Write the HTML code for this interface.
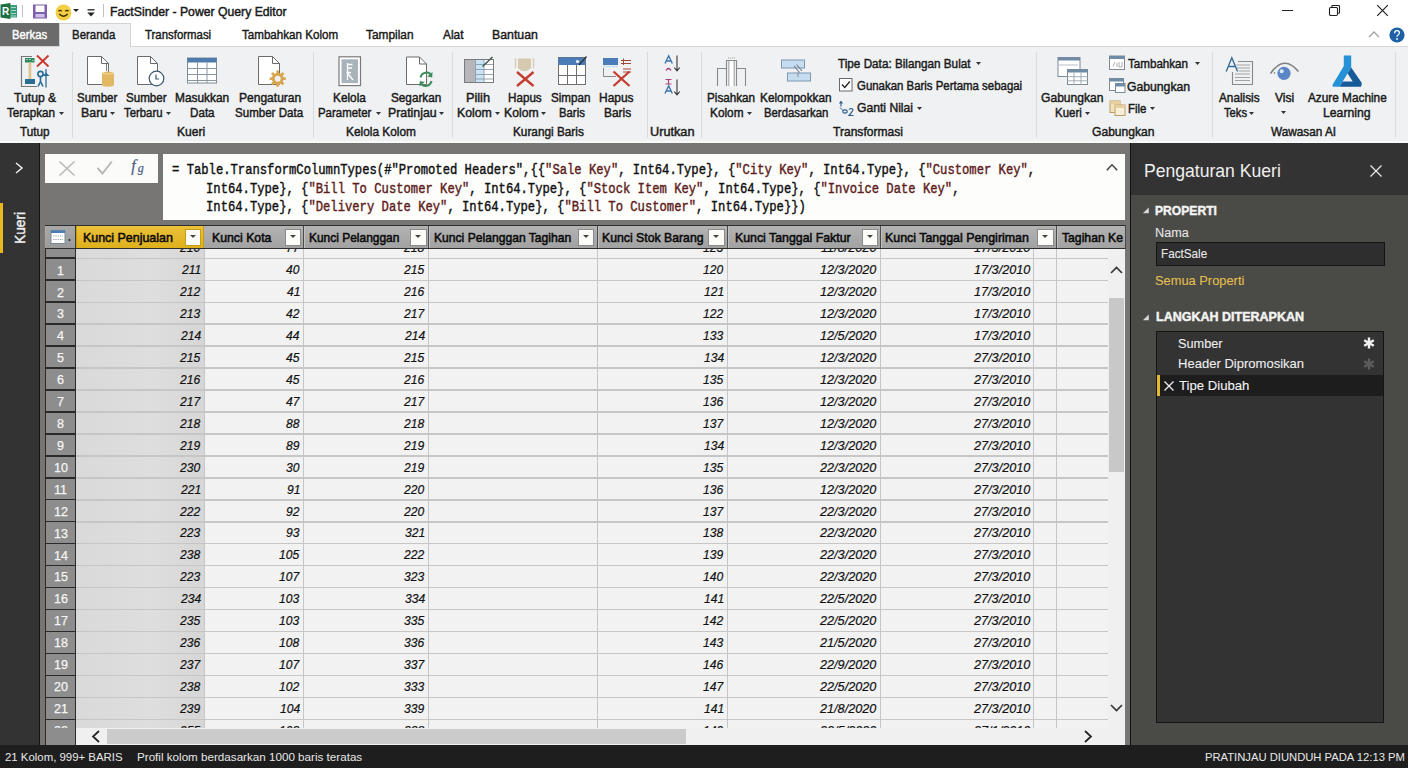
<!DOCTYPE html>
<html><head><meta charset="utf-8">
<style>
*{box-sizing:border-box;margin:0;padding:0}
html,body{width:1408px;height:768px;overflow:hidden;background:#f1f1f1;font-family:"Liberation Sans",sans-serif}
.a{position:absolute}
.t{position:absolute;line-height:1;white-space:pre;-webkit-text-stroke:0.45px currentColor}
</style></head><body>
<div class="a" style="left:0px;top:0px;width:1408px;height:46px;background:#ffffff;"></div>
<div class="a" style="left:0px;top:46px;width:1408px;height:97px;background:#eff1f2;"></div>
<div class="a" style="left:0px;top:46px;width:1408px;height:1px;background:#d8d8d8;"></div>
<div class="a" style="left:0px;top:141px;width:1408px;height:1.5px;background:#f8f9f9;"></div>
<svg class="a" style="left:0;top:2px" width="18" height="18" viewBox="0 0 18 18">
  <path d="M0.5 2.5 L10.5 1 L10.5 17 L0.5 15.5 Z" fill="#1e6e44"/>
  <rect x="10" y="3" width="7" height="12.5" fill="#3b9c7d"/>
  <path d="M11 5.5h5M11 8.5h5M11 11.5h5M11 14h5" stroke="#9fdcc8" stroke-width="1"/>
  <text x="2" y="13" font-family="Liberation Sans" font-weight="bold" font-size="10" fill="#fff">R</text>
 </svg>
<div class="a" style="left:22px;top:5px;width:1px;height:12px;background:#c0c0c0;"></div>
<svg class="a" style="left:33px;top:4px" width="14" height="15" viewBox="0 0 14 15">
  <rect x="0" y="0.5" width="14" height="14" fill="#7e5fae"/>
  <rect x="2.5" y="1.5" width="9" height="6.5" fill="#fbfbfb"/>
  <rect x="2.5" y="10" width="9" height="3.5" fill="#cfc0e6"/>
 </svg>
<svg class="a" style="left:55px;top:4px" width="17" height="17" viewBox="0 0 17 17">
  <circle cx="8.5" cy="8.5" r="8" fill="#f2cf45"/>
  <path d="M3.5 7.3 q1.6 -1.8 3.2 0 M10.3 7.3 q1.6 -1.8 3.2 0" stroke="#3a2a00" stroke-width="1.3" fill="none"/>
  <path d="M4.3 10 q4.2 4.5 8.4 0" stroke="#3a2a00" stroke-width="1.5" fill="none"/>
 </svg>
<svg class="a" style="left:73px;top:9px" width="6" height="3"><path d="M0 0H6L3.0 3Z" fill="#222"/></svg>
<svg class="a" style="left:87px;top:9px" width="8" height="8"><path d="M0.5 0.8h7" stroke="#222" stroke-width="1.3"/><path d="M0.3 3.5h7.4l-3.7 4z" fill="#222"/></svg>
<div class="a" style="left:103px;top:4px;width:1px;height:13px;background:#c0c0c0;"></div>
<div class="t" style="left:109.71px;top:5.70px;font-size:12.3px;color:#1a1a1a;transform:scaleX(0.9938);transform-origin:0 0;">FactSinder - Power Query Editor</div>
<div class="a" style="left:1282px;top:10px;width:11px;height:1px;background:#222;"></div>
<svg class="a" style="left:1328px;top:4px" width="13" height="13" viewBox="0 0 13 13"><rect x="1.5" y="3.5" width="8" height="8" rx="1.2" fill="none" stroke="#222" stroke-width="1.1"/><path d="M3.8 3.5 V2.2 Q3.8 1.5 4.5 1.5 H10.8 Q11.5 1.5 11.5 2.2 V8.5 Q11.5 9.2 10.8 9.2 H9.5" fill="none" stroke="#222" stroke-width="1.1"/></svg>
<svg class="a" style="left:1376px;top:4px" width="13" height="13" viewBox="0 0 13 13"><path d="M1.2 1.2L11.8 11.8M11.8 1.2L1.2 11.8" stroke="#222" stroke-width="1.2"/></svg>
<div class="a" style="left:0px;top:23px;width:59px;height:23px;background:#6b6b6b;"></div>
<div class="a" style="left:59px;top:23px;width:72px;height:24px;background:#eff1f2;border:1px solid #d2d2d2;border-bottom:none;box-sizing:border-box"></div>
<div class="t" style="left:11.55px;top:28.00px;font-size:13.4px;color:#ffffff;transform:scaleX(0.8450);transform-origin:0 0;">Berkas</div>
<div class="t" style="left:72.25px;top:28.00px;font-size:13.4px;color:#1a1a1a;transform:scaleX(0.8540);transform-origin:0 0;">Beranda</div>
<div class="t" style="left:145.40px;top:28.00px;font-size:13.4px;color:#1a1a1a;transform:scaleX(0.8519);transform-origin:0 0;">Transformasi</div>
<div class="t" style="left:241.50px;top:28.00px;font-size:13.4px;color:#1a1a1a;transform:scaleX(0.8664);transform-origin:0 0;">Tambahkan Kolom</div>
<div class="t" style="left:366.00px;top:28.00px;font-size:13.4px;color:#1a1a1a;transform:scaleX(0.8868);transform-origin:0 0;">Tampilan</div>
<div class="t" style="left:442.60px;top:28.00px;font-size:13.4px;color:#1a1a1a;transform:scaleX(0.8870);transform-origin:0 0;">Alat</div>
<div class="t" style="left:491.88px;top:28.00px;font-size:13.4px;color:#1a1a1a;transform:scaleX(0.9208);transform-origin:0 0;">Bantuan</div>
<svg class="a" style="left:1368px;top:31px" width="12" height="7"><path d="M1 6L6 1L11 6" stroke="#a0a0a0" stroke-width="1.3" fill="none"/></svg>
<svg class="a" style="left:1389px;top:27px" width="16" height="16" viewBox="0 0 16 16"><circle cx="8" cy="8" r="7.6" fill="#1d62a6"/><path d="M5.6 6.2 Q5.6 3.6 8 3.6 Q10.4 3.6 10.4 5.8 Q10.4 7.2 9 8 Q8 8.6 8 9.8" stroke="#fff" stroke-width="1.3" fill="none"/><circle cx="8" cy="12" r="0.9" fill="#fff"/></svg>
<div class="t" style="left:14.10px;top:92.30px;font-size:12.6px;color:#1a1a1a;transform:scaleX(0.9674);transform-origin:0 0;">Tutup &amp;</div>
<div class="t" style="left:6.80px;top:106.80px;font-size:12.6px;color:#1a1a1a;transform:scaleX(0.9255);transform-origin:0 0;">Terapkan</div>
<div class="t" style="left:77.49px;top:92.30px;font-size:12.6px;color:#1a1a1a;transform:scaleX(0.9140);transform-origin:0 0;">Sumber</div>
<div class="t" style="left:80.82px;top:106.80px;font-size:12.6px;color:#1a1a1a;transform:scaleX(0.9840);transform-origin:0 0;">Baru</div>
<div class="t" style="left:125.88px;top:92.30px;font-size:12.6px;color:#1a1a1a;transform:scaleX(0.9209);transform-origin:0 0;">Sumber</div>
<div class="t" style="left:123.90px;top:106.80px;font-size:12.6px;color:#1a1a1a;transform:scaleX(0.9024);transform-origin:0 0;">Terbaru</div>
<div class="t" style="left:174.56px;top:92.30px;font-size:12.6px;color:#1a1a1a;transform:scaleX(0.9446);transform-origin:0 0;">Masukkan</div>
<div class="t" style="left:189.58px;top:106.80px;font-size:12.6px;color:#1a1a1a;transform:scaleX(0.9240);transform-origin:0 0;">Data</div>
<div class="t" style="left:238.84px;top:92.30px;font-size:12.6px;color:#1a1a1a;transform:scaleX(0.9556);transform-origin:0 0;">Pengaturan</div>
<div class="t" style="left:235.48px;top:106.80px;font-size:12.6px;color:#1a1a1a;transform:scaleX(0.9178);transform-origin:0 0;">Sumber Data</div>
<div class="t" style="left:332.56px;top:92.30px;font-size:12.6px;color:#1a1a1a;transform:scaleX(0.9382);transform-origin:0 0;">Kelola</div>
<div class="t" style="left:317.99px;top:106.80px;font-size:12.6px;color:#1a1a1a;transform:scaleX(0.9069);transform-origin:0 0;">Parameter</div>
<div class="t" style="left:390.77px;top:92.30px;font-size:12.6px;color:#1a1a1a;transform:scaleX(0.9327);transform-origin:0 0;">Segarkan</div>
<div class="t" style="left:388.02px;top:106.80px;font-size:12.6px;color:#1a1a1a;transform:scaleX(0.9792);transform-origin:0 0;">Pratinjau</div>
<div class="t" style="left:466.29px;top:92.30px;font-size:12.6px;color:#1a1a1a;transform:scaleX(1.0091);transform-origin:0 0;">Pilih</div>
<div class="t" style="left:457.22px;top:106.80px;font-size:12.6px;color:#1a1a1a;transform:scaleX(0.9765);transform-origin:0 0;">Kolom</div>
<div class="t" style="left:507.97px;top:92.30px;font-size:12.6px;color:#1a1a1a;transform:scaleX(0.9257);transform-origin:0 0;">Hapus</div>
<div class="t" style="left:503.73px;top:106.80px;font-size:12.6px;color:#1a1a1a;transform:scaleX(0.9706);transform-origin:0 0;">Kolom</div>
<div class="t" style="left:551.48px;top:92.30px;font-size:12.6px;color:#1a1a1a;transform:scaleX(0.9244);transform-origin:0 0;">Simpan</div>
<div class="t" style="left:559.00px;top:106.80px;font-size:12.6px;color:#1a1a1a;transform:scaleX(0.9000);transform-origin:0 0;">Baris</div>
<div class="t" style="left:599.35px;top:92.30px;font-size:12.6px;color:#1a1a1a;transform:scaleX(0.9486);transform-origin:0 0;">Hapus</div>
<div class="t" style="left:603.56px;top:106.80px;font-size:12.6px;color:#1a1a1a;transform:scaleX(0.9444);transform-origin:0 0;">Baris</div>
<div class="t" style="left:706.87px;top:92.30px;font-size:12.6px;color:#1a1a1a;transform:scaleX(0.9280);transform-origin:0 0;">Pisahkan</div>
<div class="t" style="left:709.56px;top:106.80px;font-size:12.6px;color:#1a1a1a;transform:scaleX(0.9382);transform-origin:0 0;">Kolom</div>
<div class="t" style="left:759.86px;top:92.30px;font-size:12.6px;color:#1a1a1a;transform:scaleX(0.9387);transform-origin:0 0;">Kelompokkan</div>
<div class="t" style="left:763.60px;top:106.80px;font-size:12.6px;color:#1a1a1a;transform:scaleX(0.9000);transform-origin:0 0;">Berdasarkan</div>
<div class="t" style="left:1041.04px;top:92.30px;font-size:12.6px;color:#1a1a1a;transform:scaleX(0.9603);transform-origin:0 0;">Gabungkan</div>
<div class="t" style="left:1054.59px;top:106.80px;font-size:12.6px;color:#1a1a1a;transform:scaleX(0.9107);transform-origin:0 0;">Kueri</div>
<div class="t" style="left:1219.30px;top:92.30px;font-size:12.6px;color:#1a1a1a;transform:scaleX(0.9349);transform-origin:0 0;">Analisis</div>
<div class="t" style="left:1223.80px;top:106.80px;font-size:12.6px;color:#1a1a1a;transform:scaleX(0.8880);transform-origin:0 0;">Teks</div>
<div class="t" style="left:1274.80px;top:92.30px;font-size:12.6px;color:#1a1a1a;transform:scaleX(0.9579);transform-origin:0 0;">Visi</div>
<div class="t" style="left:1307.90px;top:92.30px;font-size:12.6px;color:#1a1a1a;transform:scaleX(0.9373);transform-origin:0 0;">Azure Machine</div>
<div class="t" style="left:1323.03px;top:106.80px;font-size:12.6px;color:#1a1a1a;transform:scaleX(0.9702);transform-origin:0 0;">Learning</div>
<div class="t" style="left:20.00px;top:126.00px;font-size:12.6px;color:#1a1a1a;transform:scaleX(0.9323);transform-origin:0 0;">Tutup</div>
<div class="t" style="left:176.74px;top:126.00px;font-size:12.6px;color:#1a1a1a;transform:scaleX(0.9571);transform-origin:0 0;">Kueri</div>
<div class="t" style="left:346.46px;top:126.00px;font-size:12.6px;color:#1a1a1a;transform:scaleX(0.9431);transform-origin:0 0;">Kelola Kolom</div>
<div class="t" style="left:512.66px;top:126.00px;font-size:12.6px;color:#1a1a1a;transform:scaleX(0.9365);transform-origin:0 0;">Kurangi Baris</div>
<div class="t" style="left:650.29px;top:126.00px;font-size:12.6px;color:#1a1a1a;transform:scaleX(1.0095);transform-origin:0 0;">Urutkan</div>
<div class="t" style="left:833.00px;top:126.00px;font-size:12.6px;color:#1a1a1a;transform:scaleX(0.9583);transform-origin:0 0;">Transformasi</div>
<div class="t" style="left:1092.04px;top:126.00px;font-size:12.6px;color:#1a1a1a;transform:scaleX(0.9603);transform-origin:0 0;">Gabungkan</div>
<div class="t" style="left:1271.00px;top:126.00px;font-size:12.6px;color:#1a1a1a;transform:scaleX(0.9368);transform-origin:0 0;">Wawasan AI</div>
<div class="t" style="left:837.80px;top:57.80px;font-size:12.6px;color:#1a1a1a;transform:scaleX(0.9310);transform-origin:0 0;">Tipe Data: Bilangan Bulat</div>
<div class="t" style="left:856.79px;top:79.50px;font-size:12.6px;color:#1a1a1a;transform:scaleX(0.9072);transform-origin:0 0;">Gunakan Baris Pertama sebagai</div>
<div class="t" style="left:856.74px;top:102.30px;font-size:12.6px;color:#1a1a1a;transform:scaleX(0.9643);transform-origin:0 0;">Ganti Nilai</div>
<div class="t" style="left:1128.00px;top:57.90px;font-size:12.6px;color:#1a1a1a;transform:scaleX(0.9219);transform-origin:0 0;">Tambahkan</div>
<div class="t" style="left:1127.03px;top:80.50px;font-size:12.6px;color:#1a1a1a;transform:scaleX(0.9683);transform-origin:0 0;">Gabungkan</div>
<div class="t" style="left:1127.89px;top:102.50px;font-size:12.6px;color:#1a1a1a;transform:scaleX(0.9053);transform-origin:0 0;">File</div>
<svg class="a" style="left:59px;top:112px" width="5" height="3"><path d="M0 0H5L2.5 3Z" fill="#333"/></svg>
<svg class="a" style="left:110px;top:112px" width="5" height="3"><path d="M0 0H5L2.5 3Z" fill="#333"/></svg>
<svg class="a" style="left:166px;top:112px" width="5" height="3"><path d="M0 0H5L2.5 3Z" fill="#333"/></svg>
<svg class="a" style="left:376px;top:112px" width="5" height="3"><path d="M0 0H5L2.5 3Z" fill="#333"/></svg>
<svg class="a" style="left:439px;top:112px" width="5" height="3"><path d="M0 0H5L2.5 3Z" fill="#333"/></svg>
<svg class="a" style="left:495px;top:112px" width="5" height="3"><path d="M0 0H5L2.5 3Z" fill="#333"/></svg>
<svg class="a" style="left:541px;top:112px" width="5" height="3"><path d="M0 0H5L2.5 3Z" fill="#333"/></svg>
<svg class="a" style="left:747px;top:112px" width="5" height="3"><path d="M0 0H5L2.5 3Z" fill="#333"/></svg>
<svg class="a" style="left:1085px;top:112px" width="5" height="3"><path d="M0 0H5L2.5 3Z" fill="#333"/></svg>
<svg class="a" style="left:1249px;top:112px" width="5" height="3"><path d="M0 0H5L2.5 3Z" fill="#333"/></svg>
<svg class="a" style="left:1281px;top:111px" width="5" height="3"><path d="M0 0H5L2.5 3Z" fill="#333"/></svg>
<svg class="a" style="left:976px;top:62px" width="5" height="3"><path d="M0 0H5L2.5 3Z" fill="#333"/></svg>
<svg class="a" style="left:917px;top:107px" width="5" height="3"><path d="M0 0H5L2.5 3Z" fill="#333"/></svg>
<svg class="a" style="left:1195px;top:62px" width="5" height="3"><path d="M0 0H5L2.5 3Z" fill="#333"/></svg>
<svg class="a" style="left:1150px;top:107px" width="5" height="3"><path d="M0 0H5L2.5 3Z" fill="#333"/></svg>
<div class="a" style="left:72px;top:52px;width:1px;height:86px;background:#d9dcde;"></div>
<div class="a" style="left:313px;top:52px;width:1px;height:86px;background:#d9dcde;"></div>
<div class="a" style="left:452px;top:52px;width:1px;height:86px;background:#d9dcde;"></div>
<div class="a" style="left:647px;top:52px;width:1px;height:86px;background:#d9dcde;"></div>
<div class="a" style="left:701px;top:52px;width:1px;height:86px;background:#d9dcde;"></div>
<div class="a" style="left:1036px;top:52px;width:1px;height:86px;background:#d9dcde;"></div>
<div class="a" style="left:1212px;top:52px;width:1px;height:86px;background:#d9dcde;"></div>
<div class="a" style="left:1395px;top:52px;width:1px;height:86px;background:#d9dcde;"></div>
<svg class="a" style="left:0;top:0" width="1408" height="143" viewBox="0 0 1408 143">
<path d="M32 56.5H21.5V86.5H37" fill="none" stroke="#777" stroke-width="1.2"/>
<rect x="25" y="58" width="9.5" height="4.5" fill="#2f8b5f"/>
<path d="M26 59.5h2M29 59.5h2M32 60.5h1.5" stroke="#bfe3cf" stroke-width="0.8"/>
<rect x="28.5" y="62.5" width="2.8" height="16.5" fill="#dfc58e"/>
<rect x="25" y="79" width="10" height="5" fill="#2a6d95"/>
<path d="M37 55.5L48.5 66.5M48.5 55.5L37 66.5" stroke="#c8352b" stroke-width="1.8"/>
<circle cx="40.5" cy="74" r="2.6" fill="none" stroke="#2a6d95" stroke-width="1.6"/>
<path d="M40.5 76.5V83M38 86.5L40.5 81.5L43 86.5" stroke="#2a6d95" stroke-width="1.6" fill="none"/>
<path d="M46 69V87.5" stroke="#2a6d95" stroke-width="1.3"/>
<path d="M42.5 76L46 72.5L49.5 76Z" fill="#2a6d95"/>
<path d="M87.5 56.5H101.5L108.5 63.5V84.5H87.5Z" fill="#fff" stroke="#6b6b6b" stroke-width="1"/><path d="M101.5 56.5V63.5H108.5" fill="none" stroke="#6b6b6b" stroke-width="1"/><path d="M106.5 64V71" stroke="#777" stroke-width="1"/>
<path d="M102 73 Q108 70 114 73 V85.5 Q108 88 102 85.5Z" fill="#e2b865"/>
<path d="M102 73 Q108 75.5 114 73" stroke="#f2d79a" stroke-width="1" fill="none"/>
<path d="M137.5 56.5H150.5L157.5 63.5V84.5H137.5Z" fill="#fff" stroke="#6b6b6b" stroke-width="1"/><path d="M150.5 56.5V63.5H157.5" fill="none" stroke="#6b6b6b" stroke-width="1"/><circle cx="156.5" cy="78.5" r="7.3" fill="#fff" stroke="#3d5672" stroke-width="1.2"/>
<path d="M156 74.5V79H159" stroke="#3d5672" stroke-width="1.2" fill="none"/>
<rect x="187.5" y="58" width="29" height="25" fill="#fff" stroke="#7f8b96" stroke-width="1"/>
<rect x="187.5" y="58" width="29" height="4.5" fill="#4d7bab"/>
<path d="M188 68.5H216M188 74.5H216M188 80.5H216M197.5 62.5V83M207 62.5V83" stroke="#8a96a0" stroke-width="1"/>
<path d="M258.5 56.5H272.5L279.5 63.5V84.5H258.5Z" fill="#fff" stroke="#6b6b6b" stroke-width="1"/><path d="M272.5 56.5V63.5H279.5" fill="none" stroke="#6b6b6b" stroke-width="1"/><polygon points="285.80,77.39 285.80,80.01 283.44,80.06 282.72,81.80 284.35,83.50 282.50,85.35 280.80,83.72 279.06,84.44 279.01,86.80 276.39,86.80 276.34,84.44 274.60,83.72 272.90,85.35 271.05,83.50 272.68,81.80 271.96,80.06 269.60,80.01 269.60,77.39 271.96,77.34 272.68,75.60 271.05,73.90 272.90,72.05 274.60,73.68 276.34,72.96 276.39,70.60 279.01,70.60 279.06,72.96 280.80,73.68 282.50,72.05 284.35,73.90 282.72,75.60 283.44,77.34" fill="#d8a550"/><circle cx="277.7" cy="78.7" r="2.95" fill="#eff1f2"/><rect x="339" y="56.8" width="21.5" height="28.8" fill="#fff" stroke="#7a7a7a" stroke-width="1.2"/>
<rect x="341.5" y="59.3" width="16.5" height="23.8" fill="#a8b3ba"/>
<path d="M347.5 63V80M347.5 64.5H352.5M347.5 68H352M346.5 72.5H351M347.5 73L353 80" stroke="#fff" stroke-width="1.3" fill="none"/>
<path d="M406.5 57.0H419.5L426.5 64.0V84.5H406.5Z" fill="#fff" stroke="#6b6b6b" stroke-width="1"/><path d="M419.5 57.0V64.0H426.5" fill="none" stroke="#6b6b6b" stroke-width="1"/><path d="M420.5 77.5 A6 6 0 0 1 431.5 75.5" stroke="#3d8c5a" stroke-width="2" fill="none"/>
<path d="M432.5 72L432.2 77.5L427.2 76.5Z" fill="#3d8c5a"/>
<path d="M431.5 81 A6 6 0 0 1 420.5 83" stroke="#3d8c5a" stroke-width="2" fill="none"/>
<path d="M419.5 86.5L419.8 81L424.8 82Z" fill="#3d8c5a"/>
<rect x="464.5" y="59.5" width="29" height="23" fill="#fff" stroke="#7a7a7a" stroke-width="1"/>
<rect x="465" y="60" width="10.5" height="22" fill="#b6b6ba"/>
<rect x="475.5" y="60" width="8.5" height="22" fill="#c9e4f6"/>
<path d="M475.5 64.5H493M475.5 69.5H493M475.5 74.5H493M475.5 79H493M475.5 60V82M484 60V82" stroke="#8a9aa8" stroke-width="0.9"/>
<path d="M482.5 66.5L492.5 57" stroke="#3b5a50" stroke-width="1.5"/>
<path d="M518 58.5H531V68L527 71H522L518 68Z" fill="#d5cab0"/>
<path d="M515.5 58V68M533.5 58V68" stroke="#d8ceb6" stroke-width="1.4"/>
<path d="M517 72L533.5 86M533.5 72L517 86" stroke="#c43b30" stroke-width="2.3"/>
<rect x="558.5" y="57.5" width="27" height="27" fill="#fff" stroke="#6f6f6f" stroke-width="1"/>
<rect x="558.5" y="57.5" width="27" height="7.5" fill="#4a7db8"/>
<path d="M559 75.5H585M567.5 65V84.5M576.5 65V84.5" stroke="#6f6f6f" stroke-width="1"/>
<circle cx="577.5" cy="61.5" r="1.6" fill="#fff"/>
<path d="M579 65L586.5 56.5" stroke="#333" stroke-width="1.3"/>
<rect x="603" y="58" width="15" height="7" fill="#4a7db8"/>
<path d="M603 66.5H618" stroke="#c8dced" stroke-width="1.2"/>
<path d="M603.5 68V76.5H616" stroke="#888" stroke-width="1" fill="none"/>
<path d="M621 60.5H631M621 63.5H631M623 69H631M623 72H631M623.5 58.5V65" stroke="#a04a3a" stroke-width="1" fill="none"/>
<path d="M613.5 71.5L629.5 86M629.5 71.5L613.5 86" stroke="#c43b30" stroke-width="2.3"/>
<path d="M665 63.5L668.7 55.8L672.3 63.5M666.2 61H671.2" stroke="#3b72b0" stroke-width="1.4" fill="none"/>
<path d="M666 70.5Q668.5 66.5 671 70.5" stroke="#b0407a" stroke-width="1.3" fill="none"/>
<path d="M677 55.5V70.5M674.2 67.5L677 70.8L679.8 67.5" stroke="#333" stroke-width="1.1" fill="none"/>
<path d="M665.5 79.5H671.5M665.5 84H671.5M668.5 79.5V84" stroke="#b0407a" stroke-width="1.2" fill="none"/>
<path d="M665 93.5L668.7 85.8L672.3 93.5M666.2 91H671.2" stroke="#3b72b0" stroke-width="1.4" fill="none"/>
<path d="M677 79.5V94.5M674.2 91.5L677 94.8L679.8 91.5" stroke="#333" stroke-width="1.1" fill="none"/>
<path d="M717.5 86V68.5H726.5M736.5 68.5H745.5V86" stroke="#8a8a8a" stroke-width="1.1" fill="none"/>
<path d="M726.5 86V60.5H736.5V86M729 86V60.5M734 86V60.5" stroke="#8a8a8a" stroke-width="1.1" fill="none"/>
<rect x="729.5" y="61" width="4" height="25" fill="#ffffff"/>
<path d="M728 58H735" stroke="#9a9a9a" stroke-width="1" stroke-dasharray="1 1"/>
<rect x="781.5" y="60" width="23" height="8" fill="#c6dcef" stroke="#7d98b3" stroke-width="1"/>
<rect x="787.5" y="73" width="23" height="8" fill="#c6dcef" stroke="#7d98b3" stroke-width="1"/>
<path d="M794 66L799.5 72.5M796.5 64.5L802 71" stroke="#6d7f90" stroke-width="1.1"/>
<path d="M798 72.5V77" stroke="#6d7f90" stroke-width="0.8"/>
<rect x="839.5" y="78.5" width="12.5" height="12.5" fill="#fff" stroke="#6a6a6a" stroke-width="1"/>
<path d="M842 84.5L844.8 87.5L849.8 81.5" stroke="#222" stroke-width="1.3" fill="none"/>
<path d="M839.5 103.5L841 101.5L842.5 103.5M841 102V106.5" stroke="#2d5f8e" stroke-width="1.1" fill="none"/>
<path d="M840 107.5L843 110.5" stroke="#2d5f8e" stroke-width="1" fill="none"/>
<ellipse cx="845" cy="111.5" rx="2.2" ry="1.6" fill="none" stroke="#2d5f8e" stroke-width="1.1"/>
<path d="M849 109.5Q851.5 107.5 853 109.5Q853 111 849 115.5H853.5" stroke="#2d5f8e" stroke-width="1.2" fill="none"/>
<rect x="1058.0" y="57.5" width="22.0" height="19" fill="#fff" stroke="#7d8a96" stroke-width="1"/><rect x="1058.0" y="57.5" width="22.0" height="3" fill="#6f8ba6"/><path d="M1059 65H1078" stroke="#b8c0c8" stroke-width="1"/><rect x="1067.5" y="69.5" width="20" height="15" fill="#fff" stroke="#7d8a96" stroke-width="1"/><rect x="1067.5" y="69.5" width="20" height="3" fill="#6f8ba6"/><path d="M1067 76.7H1088M1067 80.8H1088M1074.0 72.5V85M1081.0 72.5V85" stroke="#9aa4ad" stroke-width="0.9"/><rect x="1109.5" y="56.0" width="15" height="13.5" fill="#fff" stroke="#7d8a96" stroke-width="1"/><rect x="1109.5" y="56.0" width="15" height="3" fill="#6f8ba6"/><path d="M1113 66.5L1115 62M1117 63V67M1119 62V67H1122V62" stroke="#9a9a9a" stroke-width="0.8" fill="none"/><rect x="1109.5" y="78.5" width="14" height="12" fill="#fff" stroke="#7d8a96" stroke-width="1"/><rect x="1109.5" y="78.5" width="14" height="3" fill="#6f8ba6"/><rect x="1115.5" y="83.5" width="9.5" height="9" fill="#fff" stroke="#7d8a96" stroke-width="1"/><rect x="1115.5" y="83.5" width="9.5" height="3" fill="#6f8ba6"/><rect x="1110.0" y="101.0" width="10.0" height="11.5" fill="#f3e3bd" stroke="#b99e67" stroke-width="1"/><rect x="1110.0" y="101.0" width="10.0" height="3" fill="#e6cf9c"/><rect x="1115.0" y="105.0" width="10.0" height="10.5" fill="#f8efd8" stroke="#b99e67" stroke-width="1"/><rect x="1115.0" y="105.0" width="10.0" height="3" fill="#e6cf9c"/><path d="M1232.5 72V84.5H1252.5V61.5H1238" stroke="#8a8a8a" stroke-width="1.1" fill="none"/>
<path d="M1236.5 65H1250M1236.5 68H1250M1239 71H1250M1235 74H1250M1235 77.5H1250M1235 80.5H1250" stroke="#9a9a9a" stroke-width="0.9"/>
<path d="M1226.2 71.5L1231.8 57.8L1237.6 71.5M1228.3 66.5H1235.5" stroke="#3a6b92" stroke-width="1.4" fill="none"/>
<path d="M1270.5 73.5 Q1284 54 1298.5 71.5" stroke="#808080" stroke-width="1.6" fill="none"/>
<circle cx="1284" cy="73.3" r="6.6" fill="#5b86c5"/>
<circle cx="1281.7" cy="71.2" r="2" fill="#dfe8f5"/>
<circle cx="1274.5" cy="73" r="0.7" fill="#555"/>
<path d="M1343.8 55.5H1351.2V67.5L1339.5 86.8H1333.2Q1332 86.5 1332.6 84.8L1343.8 66Z" fill="#2591d6"/>
<path d="M1351.2 67.5L1361.5 82.5Q1362.3 84 1361 86.8H1339.5L1342.8 81.5H1352.8L1347.6 73.5Z" fill="#175a98"/>
</svg>
<div class="a" style="left:0px;top:143px;width:39px;height:602px;background:#333333;"></div>
<div class="a" style="left:39px;top:143px;width:1px;height:602px;background:#151515;"></div>
<div class="a" style="left:40px;top:143px;width:1090px;height:602px;background:#777674;"></div>
<div class="a" style="left:1130px;top:143px;width:278px;height:602px;background:#4a4a46;"></div>
<div class="a" style="left:1130px;top:143px;width:278px;height:52px;background:#333333;"></div>
<div class="a" style="left:0px;top:745px;width:1408px;height:23px;background:#1e1e1e;"></div>
<div class="a" style="left:45px;top:153.5px;width:113px;height:29px;background:#fbfbfa;"></div>
<svg class="a" style="left:45px;top:153px" width="113" height="30" viewBox="45 153 113 30"><path d="M59.5 161.5L74.5 175.5M74.5 161.5L59.5 175.5" stroke="#b9b9b9" stroke-width="1.6"/><path d="M97.5 168L102.5 173.5L111.8 161.5" stroke="#b9b9b9" stroke-width="2" fill="none"/></svg>
<div class="t" style="left:131.20px;top:158.20px;font-size:16px;color:#4b5b82;font-style:italic;font-family:'Liberation Serif';-webkit-text-stroke:0.2px;">f</div>
<div class="t" style="left:137.80px;top:162.00px;font-size:12px;color:#4b5b82;font-style:italic;font-family:'Liberation Serif';-webkit-text-stroke:0.2px;">g</div>
<div class="a" style="left:163px;top:153.5px;width:962px;height:66.5px;background:#fdfdfb;"></div>
<svg class="a" style="left:1105px;top:162px" width="14" height="10"><path d="M1.8 8.2L7 2.8L12.2 8.2" stroke="#444" stroke-width="1.6" fill="none"/></svg>
<div class="a" style="left:45px;top:224.5px;width:1081px;height:1px;background:#2e2e2e;"></div>
<div class="a" style="left:45px;top:225.5px;width:1081px;height:22.5px;background:linear-gradient(#b3b3b3,#a2a2a2);"></div>
<div class="a" style="left:45px;top:247.5px;width:1081px;height:1px;background:#2e2e2e;"></div>
<div class="a" style="left:45.5px;top:225.5px;width:30.5px;height:22.5px;background:linear-gradient(#a8a8a8,#9a9a9a);border-right:1px solid #3a3a3a"></div>
<div class="a" style="left:76px;top:225.5px;width:128px;height:22.5px;background:linear-gradient(#ecc23a,#deb01c);border:1px solid #c89a10;border-top:none;border-bottom:none"></div>
<div class="a" style="left:303px;top:225.5px;width:1px;height:22.5px;background:#4a4a4a;"></div>
<div class="a" style="left:304px;top:225.5px;width:1px;height:22.5px;background:#c0c0c0;"></div>
<div class="a" style="left:428px;top:225.5px;width:1px;height:22.5px;background:#4a4a4a;"></div>
<div class="a" style="left:429px;top:225.5px;width:1px;height:22.5px;background:#c0c0c0;"></div>
<div class="a" style="left:597px;top:225.5px;width:1px;height:22.5px;background:#4a4a4a;"></div>
<div class="a" style="left:598px;top:225.5px;width:1px;height:22.5px;background:#c0c0c0;"></div>
<div class="a" style="left:727px;top:225.5px;width:1px;height:22.5px;background:#4a4a4a;"></div>
<div class="a" style="left:728px;top:225.5px;width:1px;height:22.5px;background:#c0c0c0;"></div>
<div class="a" style="left:880px;top:225.5px;width:1px;height:22.5px;background:#4a4a4a;"></div>
<div class="a" style="left:881px;top:225.5px;width:1px;height:22.5px;background:#c0c0c0;"></div>
<div class="a" style="left:1056px;top:225.5px;width:1px;height:22.5px;background:#4a4a4a;"></div>
<div class="a" style="left:1057px;top:225.5px;width:1px;height:22.5px;background:#c0c0c0;"></div>
<div class="a" style="left:1125px;top:224.5px;width:1px;height:24px;background:#4a4a4a;"></div>
<svg class="a" style="left:50px;top:229px" width="24" height="17" viewBox="50 229 24 17"><rect x="51" y="230.5" width="14" height="13" fill="#fff" stroke="#7a8a9a" stroke-width="1"/><rect x="51" y="230.5" width="14" height="2.5" fill="#4a7db8"/><path d="M53 236H63M53 239.5H63" stroke="#aab" stroke-width="1" stroke-dasharray="1.5 0.8"/><circle cx="69.5" cy="240" r="1" fill="#222"/></svg>
<div class="t" style="left:82.86px;top:230.50px;font-size:13.3px;color:#0a0a0a;transform:scaleX(0.9351);transform-origin:0 0;-webkit-text-stroke:0.55px #0a0a0a;">Kunci Penjualan</div>
<div class="t" style="left:212.08px;top:230.50px;font-size:13.3px;color:#0a0a0a;transform:scaleX(0.9238);transform-origin:0 0;-webkit-text-stroke:0.55px #0a0a0a;">Kunci Kota</div>
<div class="t" style="left:309.10px;top:230.50px;font-size:13.3px;color:#0a0a0a;transform:scaleX(0.8990);transform-origin:0 0;-webkit-text-stroke:0.55px #0a0a0a;">Kunci Pelanggan</div>
<div class="t" style="left:433.99px;top:230.50px;font-size:13.3px;color:#0a0a0a;transform:scaleX(0.9114);transform-origin:0 0;-webkit-text-stroke:0.55px #0a0a0a;">Kunci Pelanggan Tagihan</div>
<div class="t" style="left:602.48px;top:230.50px;font-size:13.3px;color:#0a0a0a;transform:scaleX(0.9222);transform-origin:0 0;-webkit-text-stroke:0.55px #0a0a0a;">Kunci Stok Barang</div>
<div class="t" style="left:735.07px;top:230.50px;font-size:13.3px;color:#0a0a0a;transform:scaleX(0.9274);transform-origin:0 0;-webkit-text-stroke:0.55px #0a0a0a;">Kunci Tanggal Faktur</div>
<div class="t" style="left:885.07px;top:230.50px;font-size:13.3px;color:#0a0a0a;transform:scaleX(0.9329);transform-origin:0 0;-webkit-text-stroke:0.55px #0a0a0a;">Kunci Tanggal Pengiriman</div>
<div class="t" style="left:1061.50px;top:230.50px;font-size:13.3px;color:#0a0a0a;transform:scaleX(0.9167);transform-origin:0 0;-webkit-text-stroke:0.55px #0a0a0a;">Tagihan Ke</div>
<div class="a" style="left:185px;top:228.5px;width:16px;height:17px;background:#fbfbf7;border:1px solid #c79d18"></div>
<svg class="a" style="left:190px;top:235px" width="6" height="3"><path d="M0 0H6L3.0 3Z" fill="#444"/></svg>
<div class="a" style="left:285px;top:228.5px;width:16px;height:17px;background:#fbfbf7;border:1px solid #8a8a8a"></div>
<svg class="a" style="left:290px;top:235px" width="6" height="3"><path d="M0 0H6L3.0 3Z" fill="#444"/></svg>
<div class="a" style="left:410px;top:228.5px;width:17px;height:17px;background:#fbfbf7;border:1px solid #8a8a8a"></div>
<svg class="a" style="left:415px;top:235px" width="6" height="3"><path d="M0 0H6L3.0 3Z" fill="#444"/></svg>
<div class="a" style="left:578px;top:228.5px;width:16px;height:17px;background:#fbfbf7;border:1px solid #8a8a8a"></div>
<svg class="a" style="left:583px;top:235px" width="6" height="3"><path d="M0 0H6L3.0 3Z" fill="#444"/></svg>
<div class="a" style="left:708px;top:228.5px;width:17px;height:17px;background:#fbfbf7;border:1px solid #8a8a8a"></div>
<svg class="a" style="left:713px;top:235px" width="6" height="3"><path d="M0 0H6L3.0 3Z" fill="#444"/></svg>
<div class="a" style="left:862px;top:228.5px;width:16px;height:17px;background:#fbfbf7;border:1px solid #8a8a8a"></div>
<svg class="a" style="left:867px;top:235px" width="6" height="3"><path d="M0 0H6L3.0 3Z" fill="#444"/></svg>
<div class="a" style="left:1037px;top:228.5px;width:17px;height:17px;background:#fbfbf7;border:1px solid #8a8a8a"></div>
<svg class="a" style="left:1042px;top:235px" width="6" height="3"><path d="M0 0H6L3.0 3Z" fill="#444"/></svg>
<div class="a" style="left:0;top:248.5px;width:1126px;height:479.5px;overflow:hidden"><div class="a" style="left:45px;top:0.0px;width:1063px;height:479.5px;background:#f2f2f2;"></div><div class="a" style="left:76px;top:0.0px;width:128px;height:479.5px;background:linear-gradient(90deg,#d9d9d9,#dedede 60%,#d6d6d6);"></div><div class="a" style="left:45px;top:0.0px;width:31px;height:479.5px;background:#8d8d8d;"></div><div class="a" style="left:1108px;top:0.0px;width:17px;height:479.5px;background:#f0f0f0;"></div><div class="a" style="left:76px;top:9.1px;width:1032px;height:1.4px;background:#c6c6c6;"></div><div class="a" style="left:45px;top:8.9px;width:31px;height:1.5px;background:#2a2a2a;"></div><div class="a" style="left:76px;top:31.06px;width:1032px;height:1.4px;background:#c6c6c6;"></div><div class="a" style="left:45px;top:30.86px;width:31px;height:1.5px;background:#2a2a2a;"></div><div class="a" style="left:76px;top:53.02px;width:1032px;height:1.4px;background:#c6c6c6;"></div><div class="a" style="left:45px;top:52.82px;width:31px;height:1.5px;background:#2a2a2a;"></div><div class="a" style="left:76px;top:74.98px;width:1032px;height:1.4px;background:#c6c6c6;"></div><div class="a" style="left:45px;top:74.78px;width:31px;height:1.5px;background:#2a2a2a;"></div><div class="a" style="left:76px;top:96.94px;width:1032px;height:1.4px;background:#c6c6c6;"></div><div class="a" style="left:45px;top:96.74px;width:31px;height:1.5px;background:#2a2a2a;"></div><div class="a" style="left:76px;top:118.9px;width:1032px;height:1.4px;background:#c6c6c6;"></div><div class="a" style="left:45px;top:118.7px;width:31px;height:1.5px;background:#2a2a2a;"></div><div class="a" style="left:76px;top:140.86px;width:1032px;height:1.4px;background:#c6c6c6;"></div><div class="a" style="left:45px;top:140.66px;width:31px;height:1.5px;background:#2a2a2a;"></div><div class="a" style="left:76px;top:162.82px;width:1032px;height:1.4px;background:#c6c6c6;"></div><div class="a" style="left:45px;top:162.62px;width:31px;height:1.5px;background:#2a2a2a;"></div><div class="a" style="left:76px;top:184.78px;width:1032px;height:1.4px;background:#c6c6c6;"></div><div class="a" style="left:45px;top:184.58px;width:31px;height:1.5px;background:#2a2a2a;"></div><div class="a" style="left:76px;top:206.74px;width:1032px;height:1.4px;background:#c6c6c6;"></div><div class="a" style="left:45px;top:206.54px;width:31px;height:1.5px;background:#2a2a2a;"></div><div class="a" style="left:76px;top:228.7px;width:1032px;height:1.4px;background:#c6c6c6;"></div><div class="a" style="left:45px;top:228.5px;width:31px;height:1.5px;background:#2a2a2a;"></div><div class="a" style="left:76px;top:250.66px;width:1032px;height:1.4px;background:#c6c6c6;"></div><div class="a" style="left:45px;top:250.46px;width:31px;height:1.5px;background:#2a2a2a;"></div><div class="a" style="left:76px;top:272.62px;width:1032px;height:1.4px;background:#c6c6c6;"></div><div class="a" style="left:45px;top:272.42px;width:31px;height:1.5px;background:#2a2a2a;"></div><div class="a" style="left:76px;top:294.58px;width:1032px;height:1.4px;background:#c6c6c6;"></div><div class="a" style="left:45px;top:294.38px;width:31px;height:1.5px;background:#2a2a2a;"></div><div class="a" style="left:76px;top:316.54px;width:1032px;height:1.4px;background:#c6c6c6;"></div><div class="a" style="left:45px;top:316.34px;width:31px;height:1.5px;background:#2a2a2a;"></div><div class="a" style="left:76px;top:338.5px;width:1032px;height:1.4px;background:#c6c6c6;"></div><div class="a" style="left:45px;top:338.3px;width:31px;height:1.5px;background:#2a2a2a;"></div><div class="a" style="left:76px;top:360.46px;width:1032px;height:1.4px;background:#c6c6c6;"></div><div class="a" style="left:45px;top:360.26px;width:31px;height:1.5px;background:#2a2a2a;"></div><div class="a" style="left:76px;top:382.42px;width:1032px;height:1.4px;background:#c6c6c6;"></div><div class="a" style="left:45px;top:382.22px;width:31px;height:1.5px;background:#2a2a2a;"></div><div class="a" style="left:76px;top:404.38px;width:1032px;height:1.4px;background:#c6c6c6;"></div><div class="a" style="left:45px;top:404.18px;width:31px;height:1.5px;background:#2a2a2a;"></div><div class="a" style="left:76px;top:426.34px;width:1032px;height:1.4px;background:#c6c6c6;"></div><div class="a" style="left:45px;top:426.14px;width:31px;height:1.5px;background:#2a2a2a;"></div><div class="a" style="left:76px;top:448.3px;width:1032px;height:1.4px;background:#c6c6c6;"></div><div class="a" style="left:45px;top:448.1px;width:31px;height:1.5px;background:#2a2a2a;"></div><div class="a" style="left:76px;top:470.26px;width:1032px;height:1.4px;background:#c6c6c6;"></div><div class="a" style="left:45px;top:470.06px;width:31px;height:1.5px;background:#2a2a2a;"></div><div class="a" style="left:45px;top:0.0px;width:1px;height:479.5px;background:#2a2a2a;"></div><div class="a" style="left:75px;top:0.0px;width:1px;height:479.5px;background:#2a2a2a;"></div><div class="a" style="left:204px;top:0.0px;width:1px;height:479.5px;background:#c6c6c6;"></div><div class="a" style="left:303px;top:0.0px;width:1px;height:479.5px;background:#c6c6c6;"></div><div class="a" style="left:428px;top:0.0px;width:1px;height:479.5px;background:#c6c6c6;"></div><div class="a" style="left:597px;top:0.0px;width:1px;height:479.5px;background:#c6c6c6;"></div><div class="a" style="left:727px;top:0.0px;width:1px;height:479.5px;background:#c6c6c6;"></div><div class="a" style="left:880px;top:0.0px;width:1px;height:479.5px;background:#c6c6c6;"></div><div class="a" style="left:1033px;top:0.0px;width:1px;height:479.5px;background:#c6c6c6;"></div><div class="a" style="left:1056px;top:0.0px;width:1px;height:479.5px;background:#c6c6c6;"></div><div class="a" style="left:1109px;top:49.5px;width:15px;height:173.5px;background:#c8c8c8;"></div><svg class="a" style="left:1109px;top:16.5px" width="16" height="10"><path d="M2 8L7.5 2.5L13 8" stroke="#333" stroke-width="1.6" fill="none"/></svg><svg class="a" style="left:1109px;top:454.5px" width="16" height="10"><path d="M2 2L7.5 7.5L13 2" stroke="#333" stroke-width="1.6" fill="none"/></svg><div class="t" style="left:180.04px;top:-7.02px;font-size:13.0px;color:#111;font-style:italic;transform:scaleX(0.9300);transform-origin:0 0;-webkit-text-stroke:0.2px #111;">210</div><div class="t" style="left:285.55px;top:-7.02px;font-size:13.0px;color:#111;font-style:italic;transform:scaleX(0.9300);transform-origin:0 0;-webkit-text-stroke:0.2px #111;">77</div><div class="t" style="left:404.04px;top:-7.02px;font-size:13.0px;color:#111;font-style:italic;transform:scaleX(0.9300);transform-origin:0 0;-webkit-text-stroke:0.2px #111;">218</div><div class="t" style="left:703.04px;top:-7.02px;font-size:13.0px;color:#111;font-style:italic;transform:scaleX(0.9300);transform-origin:0 0;-webkit-text-stroke:0.2px #111;">123</div><div class="t" style="left:821.42px;top:-7.02px;font-size:13.0px;color:#111;font-style:italic;transform:scaleX(0.9750);transform-origin:0 0;-webkit-text-stroke:0.2px #111;">11/8/2020</div><div class="t" style="left:974.45px;top:-7.02px;font-size:13.0px;color:#111;font-style:italic;transform:scaleX(0.9750);transform-origin:0 0;-webkit-text-stroke:0.2px #111;">17/3/2010</div><div class="t" style="left:57.00px;top:15.10px;font-size:13.2px;color:#f5f5f5;transform:scaleX(0.9500);transform-origin:0 0;-webkit-text-stroke:0.25px #f5f5f5;">1</div><div class="t" style="left:181.90px;top:14.90px;font-size:13.0px;color:#111;font-style:italic;transform:scaleX(0.9300);transform-origin:0 0;-webkit-text-stroke:0.2px #111;">211</div><div class="t" style="left:286.48px;top:14.90px;font-size:13.0px;color:#111;font-style:italic;transform:scaleX(0.9300);transform-origin:0 0;-webkit-text-stroke:0.2px #111;">40</div><div class="t" style="left:404.04px;top:14.90px;font-size:13.0px;color:#111;font-style:italic;transform:scaleX(0.9300);transform-origin:0 0;-webkit-text-stroke:0.2px #111;">215</div><div class="t" style="left:703.04px;top:14.90px;font-size:13.0px;color:#111;font-style:italic;transform:scaleX(0.9300);transform-origin:0 0;-webkit-text-stroke:0.2px #111;">120</div><div class="t" style="left:820.45px;top:14.90px;font-size:13.0px;color:#111;font-style:italic;transform:scaleX(0.9750);transform-origin:0 0;-webkit-text-stroke:0.2px #111;">12/3/2020</div><div class="t" style="left:974.45px;top:14.90px;font-size:13.0px;color:#111;font-style:italic;transform:scaleX(0.9750);transform-origin:0 0;-webkit-text-stroke:0.2px #111;">17/3/2010</div><div class="t" style="left:57.00px;top:37.02px;font-size:13.2px;color:#f5f5f5;transform:scaleX(0.9500);transform-origin:0 0;-webkit-text-stroke:0.25px #f5f5f5;">2</div><div class="t" style="left:180.04px;top:36.82px;font-size:13.0px;color:#111;font-style:italic;transform:scaleX(0.9300);transform-origin:0 0;-webkit-text-stroke:0.2px #111;">212</div><div class="t" style="left:287.41px;top:36.82px;font-size:13.0px;color:#111;font-style:italic;transform:scaleX(0.9300);transform-origin:0 0;-webkit-text-stroke:0.2px #111;">41</div><div class="t" style="left:404.04px;top:36.82px;font-size:13.0px;color:#111;font-style:italic;transform:scaleX(0.9300);transform-origin:0 0;-webkit-text-stroke:0.2px #111;">216</div><div class="t" style="left:703.97px;top:36.82px;font-size:13.0px;color:#111;font-style:italic;transform:scaleX(0.9300);transform-origin:0 0;-webkit-text-stroke:0.2px #111;">121</div><div class="t" style="left:820.45px;top:36.82px;font-size:13.0px;color:#111;font-style:italic;transform:scaleX(0.9750);transform-origin:0 0;-webkit-text-stroke:0.2px #111;">12/3/2020</div><div class="t" style="left:974.45px;top:36.82px;font-size:13.0px;color:#111;font-style:italic;transform:scaleX(0.9750);transform-origin:0 0;-webkit-text-stroke:0.2px #111;">17/3/2010</div><div class="t" style="left:57.00px;top:58.94px;font-size:13.2px;color:#f5f5f5;transform:scaleX(0.9500);transform-origin:0 0;-webkit-text-stroke:0.25px #f5f5f5;">3</div><div class="t" style="left:180.04px;top:58.74px;font-size:13.0px;color:#111;font-style:italic;transform:scaleX(0.9300);transform-origin:0 0;-webkit-text-stroke:0.2px #111;">213</div><div class="t" style="left:286.48px;top:58.74px;font-size:13.0px;color:#111;font-style:italic;transform:scaleX(0.9300);transform-origin:0 0;-webkit-text-stroke:0.2px #111;">42</div><div class="t" style="left:404.04px;top:58.74px;font-size:13.0px;color:#111;font-style:italic;transform:scaleX(0.9300);transform-origin:0 0;-webkit-text-stroke:0.2px #111;">217</div><div class="t" style="left:703.04px;top:58.74px;font-size:13.0px;color:#111;font-style:italic;transform:scaleX(0.9300);transform-origin:0 0;-webkit-text-stroke:0.2px #111;">122</div><div class="t" style="left:820.45px;top:58.74px;font-size:13.0px;color:#111;font-style:italic;transform:scaleX(0.9750);transform-origin:0 0;-webkit-text-stroke:0.2px #111;">12/3/2020</div><div class="t" style="left:974.45px;top:58.74px;font-size:13.0px;color:#111;font-style:italic;transform:scaleX(0.9750);transform-origin:0 0;-webkit-text-stroke:0.2px #111;">17/3/2010</div><div class="t" style="left:57.47px;top:80.86px;font-size:13.2px;color:#f5f5f5;transform:scaleX(0.9500);transform-origin:0 0;-webkit-text-stroke:0.25px #f5f5f5;">4</div><div class="t" style="left:180.97px;top:80.66px;font-size:13.0px;color:#111;font-style:italic;transform:scaleX(0.9300);transform-origin:0 0;-webkit-text-stroke:0.2px #111;">214</div><div class="t" style="left:286.48px;top:80.66px;font-size:13.0px;color:#111;font-style:italic;transform:scaleX(0.9300);transform-origin:0 0;-webkit-text-stroke:0.2px #111;">44</div><div class="t" style="left:404.97px;top:80.66px;font-size:13.0px;color:#111;font-style:italic;transform:scaleX(0.9300);transform-origin:0 0;-webkit-text-stroke:0.2px #111;">214</div><div class="t" style="left:703.04px;top:80.66px;font-size:13.0px;color:#111;font-style:italic;transform:scaleX(0.9300);transform-origin:0 0;-webkit-text-stroke:0.2px #111;">133</div><div class="t" style="left:820.45px;top:80.66px;font-size:13.0px;color:#111;font-style:italic;transform:scaleX(0.9750);transform-origin:0 0;-webkit-text-stroke:0.2px #111;">12/5/2020</div><div class="t" style="left:974.45px;top:80.66px;font-size:13.0px;color:#111;font-style:italic;transform:scaleX(0.9750);transform-origin:0 0;-webkit-text-stroke:0.2px #111;">17/3/2010</div><div class="t" style="left:57.00px;top:102.78px;font-size:13.2px;color:#f5f5f5;transform:scaleX(0.9500);transform-origin:0 0;-webkit-text-stroke:0.25px #f5f5f5;">5</div><div class="t" style="left:180.04px;top:102.58px;font-size:13.0px;color:#111;font-style:italic;transform:scaleX(0.9300);transform-origin:0 0;-webkit-text-stroke:0.2px #111;">215</div><div class="t" style="left:285.55px;top:102.58px;font-size:13.0px;color:#111;font-style:italic;transform:scaleX(0.9300);transform-origin:0 0;-webkit-text-stroke:0.2px #111;">45</div><div class="t" style="left:404.04px;top:102.58px;font-size:13.0px;color:#111;font-style:italic;transform:scaleX(0.9300);transform-origin:0 0;-webkit-text-stroke:0.2px #111;">215</div><div class="t" style="left:703.97px;top:102.58px;font-size:13.0px;color:#111;font-style:italic;transform:scaleX(0.9300);transform-origin:0 0;-webkit-text-stroke:0.2px #111;">134</div><div class="t" style="left:820.45px;top:102.58px;font-size:13.0px;color:#111;font-style:italic;transform:scaleX(0.9750);transform-origin:0 0;-webkit-text-stroke:0.2px #111;">12/3/2020</div><div class="t" style="left:974.45px;top:102.58px;font-size:13.0px;color:#111;font-style:italic;transform:scaleX(0.9750);transform-origin:0 0;-webkit-text-stroke:0.2px #111;">27/3/2010</div><div class="t" style="left:57.00px;top:124.70px;font-size:13.2px;color:#f5f5f5;transform:scaleX(0.9500);transform-origin:0 0;-webkit-text-stroke:0.25px #f5f5f5;">6</div><div class="t" style="left:180.04px;top:124.50px;font-size:13.0px;color:#111;font-style:italic;transform:scaleX(0.9300);transform-origin:0 0;-webkit-text-stroke:0.2px #111;">216</div><div class="t" style="left:285.55px;top:124.50px;font-size:13.0px;color:#111;font-style:italic;transform:scaleX(0.9300);transform-origin:0 0;-webkit-text-stroke:0.2px #111;">45</div><div class="t" style="left:404.04px;top:124.50px;font-size:13.0px;color:#111;font-style:italic;transform:scaleX(0.9300);transform-origin:0 0;-webkit-text-stroke:0.2px #111;">216</div><div class="t" style="left:703.04px;top:124.50px;font-size:13.0px;color:#111;font-style:italic;transform:scaleX(0.9300);transform-origin:0 0;-webkit-text-stroke:0.2px #111;">135</div><div class="t" style="left:820.45px;top:124.50px;font-size:13.0px;color:#111;font-style:italic;transform:scaleX(0.9750);transform-origin:0 0;-webkit-text-stroke:0.2px #111;">12/3/2020</div><div class="t" style="left:974.45px;top:124.50px;font-size:13.0px;color:#111;font-style:italic;transform:scaleX(0.9750);transform-origin:0 0;-webkit-text-stroke:0.2px #111;">27/3/2010</div><div class="t" style="left:57.00px;top:146.62px;font-size:13.2px;color:#f5f5f5;transform:scaleX(0.9500);transform-origin:0 0;-webkit-text-stroke:0.25px #f5f5f5;">7</div><div class="t" style="left:180.04px;top:146.42px;font-size:13.0px;color:#111;font-style:italic;transform:scaleX(0.9300);transform-origin:0 0;-webkit-text-stroke:0.2px #111;">217</div><div class="t" style="left:285.55px;top:146.42px;font-size:13.0px;color:#111;font-style:italic;transform:scaleX(0.9300);transform-origin:0 0;-webkit-text-stroke:0.2px #111;">47</div><div class="t" style="left:404.04px;top:146.42px;font-size:13.0px;color:#111;font-style:italic;transform:scaleX(0.9300);transform-origin:0 0;-webkit-text-stroke:0.2px #111;">217</div><div class="t" style="left:703.04px;top:146.42px;font-size:13.0px;color:#111;font-style:italic;transform:scaleX(0.9300);transform-origin:0 0;-webkit-text-stroke:0.2px #111;">136</div><div class="t" style="left:820.45px;top:146.42px;font-size:13.0px;color:#111;font-style:italic;transform:scaleX(0.9750);transform-origin:0 0;-webkit-text-stroke:0.2px #111;">12/3/2020</div><div class="t" style="left:974.45px;top:146.42px;font-size:13.0px;color:#111;font-style:italic;transform:scaleX(0.9750);transform-origin:0 0;-webkit-text-stroke:0.2px #111;">27/3/2010</div><div class="t" style="left:57.00px;top:168.54px;font-size:13.2px;color:#f5f5f5;transform:scaleX(0.9500);transform-origin:0 0;-webkit-text-stroke:0.25px #f5f5f5;">8</div><div class="t" style="left:180.04px;top:168.34px;font-size:13.0px;color:#111;font-style:italic;transform:scaleX(0.9300);transform-origin:0 0;-webkit-text-stroke:0.2px #111;">218</div><div class="t" style="left:286.48px;top:168.34px;font-size:13.0px;color:#111;font-style:italic;transform:scaleX(0.9300);transform-origin:0 0;-webkit-text-stroke:0.2px #111;">88</div><div class="t" style="left:404.04px;top:168.34px;font-size:13.0px;color:#111;font-style:italic;transform:scaleX(0.9300);transform-origin:0 0;-webkit-text-stroke:0.2px #111;">218</div><div class="t" style="left:703.04px;top:168.34px;font-size:13.0px;color:#111;font-style:italic;transform:scaleX(0.9300);transform-origin:0 0;-webkit-text-stroke:0.2px #111;">137</div><div class="t" style="left:820.45px;top:168.34px;font-size:13.0px;color:#111;font-style:italic;transform:scaleX(0.9750);transform-origin:0 0;-webkit-text-stroke:0.2px #111;">12/3/2020</div><div class="t" style="left:974.45px;top:168.34px;font-size:13.0px;color:#111;font-style:italic;transform:scaleX(0.9750);transform-origin:0 0;-webkit-text-stroke:0.2px #111;">27/3/2010</div><div class="t" style="left:57.00px;top:190.46px;font-size:13.2px;color:#f5f5f5;transform:scaleX(0.9500);transform-origin:0 0;-webkit-text-stroke:0.25px #f5f5f5;">9</div><div class="t" style="left:180.04px;top:190.26px;font-size:13.0px;color:#111;font-style:italic;transform:scaleX(0.9300);transform-origin:0 0;-webkit-text-stroke:0.2px #111;">219</div><div class="t" style="left:286.48px;top:190.26px;font-size:13.0px;color:#111;font-style:italic;transform:scaleX(0.9300);transform-origin:0 0;-webkit-text-stroke:0.2px #111;">89</div><div class="t" style="left:404.04px;top:190.26px;font-size:13.0px;color:#111;font-style:italic;transform:scaleX(0.9300);transform-origin:0 0;-webkit-text-stroke:0.2px #111;">219</div><div class="t" style="left:703.97px;top:190.26px;font-size:13.0px;color:#111;font-style:italic;transform:scaleX(0.9300);transform-origin:0 0;-webkit-text-stroke:0.2px #111;">134</div><div class="t" style="left:820.45px;top:190.26px;font-size:13.0px;color:#111;font-style:italic;transform:scaleX(0.9750);transform-origin:0 0;-webkit-text-stroke:0.2px #111;">12/3/2020</div><div class="t" style="left:974.45px;top:190.26px;font-size:13.0px;color:#111;font-style:italic;transform:scaleX(0.9750);transform-origin:0 0;-webkit-text-stroke:0.2px #111;">27/3/2010</div><div class="t" style="left:53.67px;top:212.38px;font-size:13.2px;color:#f5f5f5;transform:scaleX(0.9500);transform-origin:0 0;-webkit-text-stroke:0.25px #f5f5f5;">10</div><div class="t" style="left:180.04px;top:212.18px;font-size:13.0px;color:#111;font-style:italic;transform:scaleX(0.9300);transform-origin:0 0;-webkit-text-stroke:0.2px #111;">230</div><div class="t" style="left:286.48px;top:212.18px;font-size:13.0px;color:#111;font-style:italic;transform:scaleX(0.9300);transform-origin:0 0;-webkit-text-stroke:0.2px #111;">30</div><div class="t" style="left:404.04px;top:212.18px;font-size:13.0px;color:#111;font-style:italic;transform:scaleX(0.9300);transform-origin:0 0;-webkit-text-stroke:0.2px #111;">219</div><div class="t" style="left:703.04px;top:212.18px;font-size:13.0px;color:#111;font-style:italic;transform:scaleX(0.9300);transform-origin:0 0;-webkit-text-stroke:0.2px #111;">135</div><div class="t" style="left:820.45px;top:212.18px;font-size:13.0px;color:#111;font-style:italic;transform:scaleX(0.9750);transform-origin:0 0;-webkit-text-stroke:0.2px #111;">22/3/2020</div><div class="t" style="left:974.45px;top:212.18px;font-size:13.0px;color:#111;font-style:italic;transform:scaleX(0.9750);transform-origin:0 0;-webkit-text-stroke:0.2px #111;">27/3/2010</div><div class="t" style="left:54.15px;top:234.30px;font-size:13.2px;color:#f5f5f5;transform:scaleX(0.9500);transform-origin:0 0;-webkit-text-stroke:0.25px #f5f5f5;">11</div><div class="t" style="left:180.97px;top:234.10px;font-size:13.0px;color:#111;font-style:italic;transform:scaleX(0.9300);transform-origin:0 0;-webkit-text-stroke:0.2px #111;">221</div><div class="t" style="left:287.41px;top:234.10px;font-size:13.0px;color:#111;font-style:italic;transform:scaleX(0.9300);transform-origin:0 0;-webkit-text-stroke:0.2px #111;">91</div><div class="t" style="left:404.04px;top:234.10px;font-size:13.0px;color:#111;font-style:italic;transform:scaleX(0.9300);transform-origin:0 0;-webkit-text-stroke:0.2px #111;">220</div><div class="t" style="left:703.04px;top:234.10px;font-size:13.0px;color:#111;font-style:italic;transform:scaleX(0.9300);transform-origin:0 0;-webkit-text-stroke:0.2px #111;">136</div><div class="t" style="left:820.45px;top:234.10px;font-size:13.0px;color:#111;font-style:italic;transform:scaleX(0.9750);transform-origin:0 0;-webkit-text-stroke:0.2px #111;">12/3/2020</div><div class="t" style="left:974.45px;top:234.10px;font-size:13.0px;color:#111;font-style:italic;transform:scaleX(0.9750);transform-origin:0 0;-webkit-text-stroke:0.2px #111;">27/3/2010</div><div class="t" style="left:53.67px;top:256.22px;font-size:13.2px;color:#f5f5f5;transform:scaleX(0.9500);transform-origin:0 0;-webkit-text-stroke:0.25px #f5f5f5;">12</div><div class="t" style="left:180.04px;top:256.02px;font-size:13.0px;color:#111;font-style:italic;transform:scaleX(0.9300);transform-origin:0 0;-webkit-text-stroke:0.2px #111;">222</div><div class="t" style="left:286.48px;top:256.02px;font-size:13.0px;color:#111;font-style:italic;transform:scaleX(0.9300);transform-origin:0 0;-webkit-text-stroke:0.2px #111;">92</div><div class="t" style="left:404.04px;top:256.02px;font-size:13.0px;color:#111;font-style:italic;transform:scaleX(0.9300);transform-origin:0 0;-webkit-text-stroke:0.2px #111;">220</div><div class="t" style="left:703.04px;top:256.02px;font-size:13.0px;color:#111;font-style:italic;transform:scaleX(0.9300);transform-origin:0 0;-webkit-text-stroke:0.2px #111;">137</div><div class="t" style="left:820.45px;top:256.02px;font-size:13.0px;color:#111;font-style:italic;transform:scaleX(0.9750);transform-origin:0 0;-webkit-text-stroke:0.2px #111;">22/3/2020</div><div class="t" style="left:974.45px;top:256.02px;font-size:13.0px;color:#111;font-style:italic;transform:scaleX(0.9750);transform-origin:0 0;-webkit-text-stroke:0.2px #111;">27/3/2010</div><div class="t" style="left:53.67px;top:278.14px;font-size:13.2px;color:#f5f5f5;transform:scaleX(0.9500);transform-origin:0 0;-webkit-text-stroke:0.25px #f5f5f5;">13</div><div class="t" style="left:180.04px;top:277.94px;font-size:13.0px;color:#111;font-style:italic;transform:scaleX(0.9300);transform-origin:0 0;-webkit-text-stroke:0.2px #111;">223</div><div class="t" style="left:286.48px;top:277.94px;font-size:13.0px;color:#111;font-style:italic;transform:scaleX(0.9300);transform-origin:0 0;-webkit-text-stroke:0.2px #111;">93</div><div class="t" style="left:404.97px;top:277.94px;font-size:13.0px;color:#111;font-style:italic;transform:scaleX(0.9300);transform-origin:0 0;-webkit-text-stroke:0.2px #111;">321</div><div class="t" style="left:703.04px;top:277.94px;font-size:13.0px;color:#111;font-style:italic;transform:scaleX(0.9300);transform-origin:0 0;-webkit-text-stroke:0.2px #111;">138</div><div class="t" style="left:820.45px;top:277.94px;font-size:13.0px;color:#111;font-style:italic;transform:scaleX(0.9750);transform-origin:0 0;-webkit-text-stroke:0.2px #111;">22/3/2020</div><div class="t" style="left:974.45px;top:277.94px;font-size:13.0px;color:#111;font-style:italic;transform:scaleX(0.9750);transform-origin:0 0;-webkit-text-stroke:0.2px #111;">27/3/2010</div><div class="t" style="left:53.67px;top:300.06px;font-size:13.2px;color:#f5f5f5;transform:scaleX(0.9500);transform-origin:0 0;-webkit-text-stroke:0.25px #f5f5f5;">14</div><div class="t" style="left:180.04px;top:299.86px;font-size:13.0px;color:#111;font-style:italic;transform:scaleX(0.9300);transform-origin:0 0;-webkit-text-stroke:0.2px #111;">238</div><div class="t" style="left:279.04px;top:299.86px;font-size:13.0px;color:#111;font-style:italic;transform:scaleX(0.9300);transform-origin:0 0;-webkit-text-stroke:0.2px #111;">105</div><div class="t" style="left:404.04px;top:299.86px;font-size:13.0px;color:#111;font-style:italic;transform:scaleX(0.9300);transform-origin:0 0;-webkit-text-stroke:0.2px #111;">222</div><div class="t" style="left:703.04px;top:299.86px;font-size:13.0px;color:#111;font-style:italic;transform:scaleX(0.9300);transform-origin:0 0;-webkit-text-stroke:0.2px #111;">139</div><div class="t" style="left:820.45px;top:299.86px;font-size:13.0px;color:#111;font-style:italic;transform:scaleX(0.9750);transform-origin:0 0;-webkit-text-stroke:0.2px #111;">22/3/2020</div><div class="t" style="left:974.45px;top:299.86px;font-size:13.0px;color:#111;font-style:italic;transform:scaleX(0.9750);transform-origin:0 0;-webkit-text-stroke:0.2px #111;">27/3/2010</div><div class="t" style="left:53.67px;top:321.98px;font-size:13.2px;color:#f5f5f5;transform:scaleX(0.9500);transform-origin:0 0;-webkit-text-stroke:0.25px #f5f5f5;">15</div><div class="t" style="left:180.04px;top:321.78px;font-size:13.0px;color:#111;font-style:italic;transform:scaleX(0.9300);transform-origin:0 0;-webkit-text-stroke:0.2px #111;">223</div><div class="t" style="left:279.04px;top:321.78px;font-size:13.0px;color:#111;font-style:italic;transform:scaleX(0.9300);transform-origin:0 0;-webkit-text-stroke:0.2px #111;">107</div><div class="t" style="left:404.04px;top:321.78px;font-size:13.0px;color:#111;font-style:italic;transform:scaleX(0.9300);transform-origin:0 0;-webkit-text-stroke:0.2px #111;">323</div><div class="t" style="left:703.04px;top:321.78px;font-size:13.0px;color:#111;font-style:italic;transform:scaleX(0.9300);transform-origin:0 0;-webkit-text-stroke:0.2px #111;">140</div><div class="t" style="left:820.45px;top:321.78px;font-size:13.0px;color:#111;font-style:italic;transform:scaleX(0.9750);transform-origin:0 0;-webkit-text-stroke:0.2px #111;">22/3/2020</div><div class="t" style="left:974.45px;top:321.78px;font-size:13.0px;color:#111;font-style:italic;transform:scaleX(0.9750);transform-origin:0 0;-webkit-text-stroke:0.2px #111;">27/3/2010</div><div class="t" style="left:53.67px;top:343.90px;font-size:13.2px;color:#f5f5f5;transform:scaleX(0.9500);transform-origin:0 0;-webkit-text-stroke:0.25px #f5f5f5;">16</div><div class="t" style="left:180.97px;top:343.70px;font-size:13.0px;color:#111;font-style:italic;transform:scaleX(0.9300);transform-origin:0 0;-webkit-text-stroke:0.2px #111;">234</div><div class="t" style="left:279.04px;top:343.70px;font-size:13.0px;color:#111;font-style:italic;transform:scaleX(0.9300);transform-origin:0 0;-webkit-text-stroke:0.2px #111;">103</div><div class="t" style="left:404.97px;top:343.70px;font-size:13.0px;color:#111;font-style:italic;transform:scaleX(0.9300);transform-origin:0 0;-webkit-text-stroke:0.2px #111;">334</div><div class="t" style="left:703.97px;top:343.70px;font-size:13.0px;color:#111;font-style:italic;transform:scaleX(0.9300);transform-origin:0 0;-webkit-text-stroke:0.2px #111;">141</div><div class="t" style="left:820.45px;top:343.70px;font-size:13.0px;color:#111;font-style:italic;transform:scaleX(0.9750);transform-origin:0 0;-webkit-text-stroke:0.2px #111;">22/5/2020</div><div class="t" style="left:974.45px;top:343.70px;font-size:13.0px;color:#111;font-style:italic;transform:scaleX(0.9750);transform-origin:0 0;-webkit-text-stroke:0.2px #111;">27/3/2010</div><div class="t" style="left:53.67px;top:365.82px;font-size:13.2px;color:#f5f5f5;transform:scaleX(0.9500);transform-origin:0 0;-webkit-text-stroke:0.25px #f5f5f5;">17</div><div class="t" style="left:180.04px;top:365.62px;font-size:13.0px;color:#111;font-style:italic;transform:scaleX(0.9300);transform-origin:0 0;-webkit-text-stroke:0.2px #111;">235</div><div class="t" style="left:279.04px;top:365.62px;font-size:13.0px;color:#111;font-style:italic;transform:scaleX(0.9300);transform-origin:0 0;-webkit-text-stroke:0.2px #111;">103</div><div class="t" style="left:404.04px;top:365.62px;font-size:13.0px;color:#111;font-style:italic;transform:scaleX(0.9300);transform-origin:0 0;-webkit-text-stroke:0.2px #111;">335</div><div class="t" style="left:703.04px;top:365.62px;font-size:13.0px;color:#111;font-style:italic;transform:scaleX(0.9300);transform-origin:0 0;-webkit-text-stroke:0.2px #111;">142</div><div class="t" style="left:820.45px;top:365.62px;font-size:13.0px;color:#111;font-style:italic;transform:scaleX(0.9750);transform-origin:0 0;-webkit-text-stroke:0.2px #111;">22/5/2020</div><div class="t" style="left:974.45px;top:365.62px;font-size:13.0px;color:#111;font-style:italic;transform:scaleX(0.9750);transform-origin:0 0;-webkit-text-stroke:0.2px #111;">27/3/2010</div><div class="t" style="left:53.67px;top:387.74px;font-size:13.2px;color:#f5f5f5;transform:scaleX(0.9500);transform-origin:0 0;-webkit-text-stroke:0.25px #f5f5f5;">18</div><div class="t" style="left:180.04px;top:387.54px;font-size:13.0px;color:#111;font-style:italic;transform:scaleX(0.9300);transform-origin:0 0;-webkit-text-stroke:0.2px #111;">236</div><div class="t" style="left:279.04px;top:387.54px;font-size:13.0px;color:#111;font-style:italic;transform:scaleX(0.9300);transform-origin:0 0;-webkit-text-stroke:0.2px #111;">108</div><div class="t" style="left:404.04px;top:387.54px;font-size:13.0px;color:#111;font-style:italic;transform:scaleX(0.9300);transform-origin:0 0;-webkit-text-stroke:0.2px #111;">336</div><div class="t" style="left:703.04px;top:387.54px;font-size:13.0px;color:#111;font-style:italic;transform:scaleX(0.9300);transform-origin:0 0;-webkit-text-stroke:0.2px #111;">143</div><div class="t" style="left:820.45px;top:387.54px;font-size:13.0px;color:#111;font-style:italic;transform:scaleX(0.9750);transform-origin:0 0;-webkit-text-stroke:0.2px #111;">21/5/2020</div><div class="t" style="left:974.45px;top:387.54px;font-size:13.0px;color:#111;font-style:italic;transform:scaleX(0.9750);transform-origin:0 0;-webkit-text-stroke:0.2px #111;">27/3/2010</div><div class="t" style="left:53.67px;top:409.66px;font-size:13.2px;color:#f5f5f5;transform:scaleX(0.9500);transform-origin:0 0;-webkit-text-stroke:0.25px #f5f5f5;">19</div><div class="t" style="left:180.04px;top:409.46px;font-size:13.0px;color:#111;font-style:italic;transform:scaleX(0.9300);transform-origin:0 0;-webkit-text-stroke:0.2px #111;">237</div><div class="t" style="left:279.04px;top:409.46px;font-size:13.0px;color:#111;font-style:italic;transform:scaleX(0.9300);transform-origin:0 0;-webkit-text-stroke:0.2px #111;">107</div><div class="t" style="left:404.04px;top:409.46px;font-size:13.0px;color:#111;font-style:italic;transform:scaleX(0.9300);transform-origin:0 0;-webkit-text-stroke:0.2px #111;">337</div><div class="t" style="left:703.04px;top:409.46px;font-size:13.0px;color:#111;font-style:italic;transform:scaleX(0.9300);transform-origin:0 0;-webkit-text-stroke:0.2px #111;">146</div><div class="t" style="left:820.45px;top:409.46px;font-size:13.0px;color:#111;font-style:italic;transform:scaleX(0.9750);transform-origin:0 0;-webkit-text-stroke:0.2px #111;">22/9/2020</div><div class="t" style="left:974.45px;top:409.46px;font-size:13.0px;color:#111;font-style:italic;transform:scaleX(0.9750);transform-origin:0 0;-webkit-text-stroke:0.2px #111;">27/3/2010</div><div class="t" style="left:53.67px;top:431.58px;font-size:13.2px;color:#f5f5f5;transform:scaleX(0.9500);transform-origin:0 0;-webkit-text-stroke:0.25px #f5f5f5;">20</div><div class="t" style="left:180.04px;top:431.38px;font-size:13.0px;color:#111;font-style:italic;transform:scaleX(0.9300);transform-origin:0 0;-webkit-text-stroke:0.2px #111;">238</div><div class="t" style="left:279.04px;top:431.38px;font-size:13.0px;color:#111;font-style:italic;transform:scaleX(0.9300);transform-origin:0 0;-webkit-text-stroke:0.2px #111;">102</div><div class="t" style="left:404.04px;top:431.38px;font-size:13.0px;color:#111;font-style:italic;transform:scaleX(0.9300);transform-origin:0 0;-webkit-text-stroke:0.2px #111;">333</div><div class="t" style="left:703.04px;top:431.38px;font-size:13.0px;color:#111;font-style:italic;transform:scaleX(0.9300);transform-origin:0 0;-webkit-text-stroke:0.2px #111;">147</div><div class="t" style="left:820.45px;top:431.38px;font-size:13.0px;color:#111;font-style:italic;transform:scaleX(0.9750);transform-origin:0 0;-webkit-text-stroke:0.2px #111;">22/5/2020</div><div class="t" style="left:974.45px;top:431.38px;font-size:13.0px;color:#111;font-style:italic;transform:scaleX(0.9750);transform-origin:0 0;-webkit-text-stroke:0.2px #111;">27/3/2010</div><div class="t" style="left:53.67px;top:453.50px;font-size:13.2px;color:#f5f5f5;transform:scaleX(0.9500);transform-origin:0 0;-webkit-text-stroke:0.25px #f5f5f5;">21</div><div class="t" style="left:180.04px;top:453.30px;font-size:13.0px;color:#111;font-style:italic;transform:scaleX(0.9300);transform-origin:0 0;-webkit-text-stroke:0.2px #111;">239</div><div class="t" style="left:279.97px;top:453.30px;font-size:13.0px;color:#111;font-style:italic;transform:scaleX(0.9300);transform-origin:0 0;-webkit-text-stroke:0.2px #111;">104</div><div class="t" style="left:404.04px;top:453.30px;font-size:13.0px;color:#111;font-style:italic;transform:scaleX(0.9300);transform-origin:0 0;-webkit-text-stroke:0.2px #111;">339</div><div class="t" style="left:703.97px;top:453.30px;font-size:13.0px;color:#111;font-style:italic;transform:scaleX(0.9300);transform-origin:0 0;-webkit-text-stroke:0.2px #111;">141</div><div class="t" style="left:820.45px;top:453.30px;font-size:13.0px;color:#111;font-style:italic;transform:scaleX(0.9750);transform-origin:0 0;-webkit-text-stroke:0.2px #111;">21/8/2020</div><div class="t" style="left:974.45px;top:453.30px;font-size:13.0px;color:#111;font-style:italic;transform:scaleX(0.9750);transform-origin:0 0;-webkit-text-stroke:0.2px #111;">27/3/2010</div><div class="t" style="left:53.67px;top:475.42px;font-size:13.2px;color:#f5f5f5;transform:scaleX(0.9500);transform-origin:0 0;-webkit-text-stroke:0.25px #f5f5f5;">22</div><div class="t" style="left:180.04px;top:475.22px;font-size:13.0px;color:#111;font-style:italic;transform:scaleX(0.9300);transform-origin:0 0;-webkit-text-stroke:0.2px #111;">255</div><div class="t" style="left:279.04px;top:475.22px;font-size:13.0px;color:#111;font-style:italic;transform:scaleX(0.9300);transform-origin:0 0;-webkit-text-stroke:0.2px #111;">103</div><div class="t" style="left:404.04px;top:475.22px;font-size:13.0px;color:#111;font-style:italic;transform:scaleX(0.9300);transform-origin:0 0;-webkit-text-stroke:0.2px #111;">338</div><div class="t" style="left:703.04px;top:475.22px;font-size:13.0px;color:#111;font-style:italic;transform:scaleX(0.9300);transform-origin:0 0;-webkit-text-stroke:0.2px #111;">149</div><div class="t" style="left:820.45px;top:475.22px;font-size:13.0px;color:#111;font-style:italic;transform:scaleX(0.9750);transform-origin:0 0;-webkit-text-stroke:0.2px #111;">22/5/2020</div><div class="t" style="left:974.45px;top:475.22px;font-size:13.0px;color:#111;font-style:italic;transform:scaleX(0.9750);transform-origin:0 0;-webkit-text-stroke:0.2px #111;">27/1/2010</div></div>
<div class="a" style="left:76px;top:728px;width:1032px;height:17px;background:#f0f0f0;"></div>
<div class="a" style="left:45px;top:728px;width:31px;height:17px;background:#8d8d8d;border-left:1px solid #2a2a2a;border-right:1px solid #2a2a2a"></div>
<div class="a" style="left:107px;top:729px;width:579px;height:14.5px;background:#cbcbcb;"></div>
<svg class="a" style="left:88px;top:729px" width="14" height="15"><path d="M11 2L5 7.5L11 13" stroke="#222" stroke-width="1.7" fill="none"/></svg>
<svg class="a" style="left:1081px;top:729px" width="14" height="15"><path d="M4 2L10 7.5L4 13" stroke="#222" stroke-width="1.7" fill="none"/></svg>
<div class="a" style="left:1130px;top:143px;width:1px;height:602px;background:#111111;"></div>
<div class="a" style="left:1108px;top:728px;width:17px;height:17px;background:#f0f0f0;"></div><div class="t" style="left:171.88px;top:162.60px;font-size:14.9px;color:#111111;font-family:'Liberation Mono';transform:scaleX(0.8186);transform-origin:0 0;"><span style="color:#111111">= Table.TransformColumnTypes(#"Promoted Headers",{{</span><span style="color:#5e1d1d">"Sale Key"</span><span style="color:#111111">, Int64.Type}, {</span><span style="color:#5e1d1d">"City Key"</span><span style="color:#111111">, Int64.Type}, {</span><span style="color:#5e1d1d">"Customer Key"</span><span style="color:#111111">,</span></div><div class="t" style="left:206.28px;top:181.60px;font-size:14.9px;color:#111111;font-family:'Liberation Mono';transform:scaleX(0.8186);transform-origin:0 0;"><span style="color:#111111">Int64.Type}, {</span><span style="color:#5e1d1d">"Bill To Customer Key"</span><span style="color:#111111">, Int64.Type}, {</span><span style="color:#5e1d1d">"Stock Item Key"</span><span style="color:#111111">, Int64.Type}, {</span><span style="color:#5e1d1d">"Invoice Date Key"</span><span style="color:#111111">,</span></div><div class="t" style="left:206.28px;top:199.70px;font-size:14.9px;color:#111111;font-family:'Liberation Mono';transform:scaleX(0.8186);transform-origin:0 0;"><span style="color:#111111">Int64.Type}, {</span><span style="color:#5e1d1d">"Delivery Date Key"</span><span style="color:#111111">, Int64.Type}, {</span><span style="color:#5e1d1d">"Bill To Customer"</span><span style="color:#111111">, Int64.Type}})</span></div>
<svg class="a" style="left:13px;top:161px" width="12" height="14"><path d="M3 2L9 7L3 12" stroke="#f0f0f0" stroke-width="1.5" fill="none"/></svg>
<div class="a" style="left:0px;top:202.7px;width:3.2px;height:50.2px;background:#e8b820;"></div>
<div class="t" style="left:13.1px;top:244.3px;font-size:14px;color:#f0f0f0;transform:rotate(-90deg) scaleX(0.984);transform-origin:0 0">Kueri</div>
<div class="t" style="left:1144.09px;top:161.60px;font-size:18.4px;color:#f0f0f0;transform:scaleX(0.9557);transform-origin:0 0;-webkit-text-stroke:0;">Pengaturan Kueri</div>
<svg class="a" style="left:1369px;top:164px" width="14" height="14"><path d="M1.5 1.5L12.5 12.5M12.5 1.5L1.5 12.5" stroke="#e8e8e8" stroke-width="1.3"/></svg>
<svg class="a" style="left:1142px;top:207px" width="8" height="7"><path d="M6.8 0.5V6.3H0.8Z" fill="#d8d8d8"/></svg>
<div class="t" style="left:1155.48px;top:204.00px;font-size:13.2px;color:#f4f4f4;font-weight:bold;transform:scaleX(0.9182);transform-origin:0 0;">PROPERTI</div>
<div class="t" style="left:1155.37px;top:227.00px;font-size:12.3px;color:#e6e6e6;transform:scaleX(1.0281);transform-origin:0 0;-webkit-text-stroke:0.1px;">Nama</div>
<div class="a" style="left:1155.5px;top:241.5px;width:229px;height:24px;background:#2e2e2e;border:1px solid #141414"></div>
<div class="t" style="left:1161.01px;top:247.40px;font-size:13.2px;color:#e8e8e8;transform:scaleX(0.8882);transform-origin:0 0;-webkit-text-stroke:0.1px;">FactSale</div>
<div class="t" style="left:1155.41px;top:274.00px;font-size:13px;color:#e3bf50;transform:scaleX(0.9888);transform-origin:0 0;-webkit-text-stroke:0.1px;">Semua Properti</div>
<svg class="a" style="left:1142px;top:314px" width="8" height="7"><path d="M6.8 0.5V6.3H0.8Z" fill="#d8d8d8"/></svg>
<div class="t" style="left:1155.75px;top:310.20px;font-size:13.2px;color:#f4f4f4;font-weight:bold;transform:scaleX(0.9487);transform-origin:0 0;">LANGKAH DITERAPKAN</div>
<div class="a" style="left:1155.5px;top:331px;width:228.5px;height:392px;background:#333333;border:1px solid #151515"></div>
<div class="a" style="left:1156.5px;top:375px;width:226.5px;height:21.3px;background:#1d1d1d;"></div>
<div class="a" style="left:1157px;top:375px;width:2.6px;height:21.3px;background:#e3b934;"></div>
<div class="t" style="left:1178.46px;top:336.50px;font-size:13.5px;color:#eeeeee;transform:scaleX(0.9435);transform-origin:0 0;-webkit-text-stroke:0.1px;">Sumber</div>
<div class="t" style="left:1178.43px;top:357.20px;font-size:13.5px;color:#eeeeee;transform:scaleX(0.9659);transform-origin:0 0;-webkit-text-stroke:0.1px;">Header Dipromosikan</div>
<div class="t" style="left:1179.40px;top:378.50px;font-size:13.5px;color:#f4f4f4;transform:scaleX(0.9732);transform-origin:0 0;-webkit-text-stroke:0.1px;">Tipe Diubah</div>
<svg class="a" style="left:1163px;top:380px" width="12" height="12"><path d="M1.5 1.5L10.5 10.5M10.5 1.5L1.5 10.5" stroke="#f0f0f0" stroke-width="1.3"/></svg>
<svg class="a" style="left:1362px;top:336px" width="14" height="14" viewBox="0 0 14 14"><path d="M7 1.5V12.5M2.2 4.2L11.8 9.8M11.8 4.2L2.2 9.8" stroke="#f2f2f2" stroke-width="2.4"/><circle cx="7" cy="7" r="2.2" fill="#f2f2f2"/></svg>
<svg class="a" style="left:1362px;top:357px" width="14" height="14" viewBox="0 0 14 14"><path d="M7 1.5V12.5M2.2 4.2L11.8 9.8M11.8 4.2L2.2 9.8" stroke="#5c5c5c" stroke-width="2.4"/><circle cx="7" cy="7" r="2.2" fill="#5c5c5c"/></svg>
<div class="t" style="left:5.03px;top:751.50px;font-size:11.8px;color:#e8e8e8;transform:scaleX(0.9667);transform-origin:0 0;-webkit-text-stroke:0;">21 Kolom, 999+ BARIS</div>
<div class="t" style="left:137.01px;top:751.50px;font-size:11.8px;color:#e8e8e8;transform:scaleX(0.9868);transform-origin:0 0;-webkit-text-stroke:0;">Profil kolom berdasarkan 1000 baris teratas</div>
<div class="t" style="left:1205.05px;top:751.50px;font-size:11.8px;color:#e8e8e8;transform:scaleX(0.9519);transform-origin:0 0;-webkit-text-stroke:0;">PRATINJAU DIUNDUH PADA 12:13 PM</div>

</body></html>
